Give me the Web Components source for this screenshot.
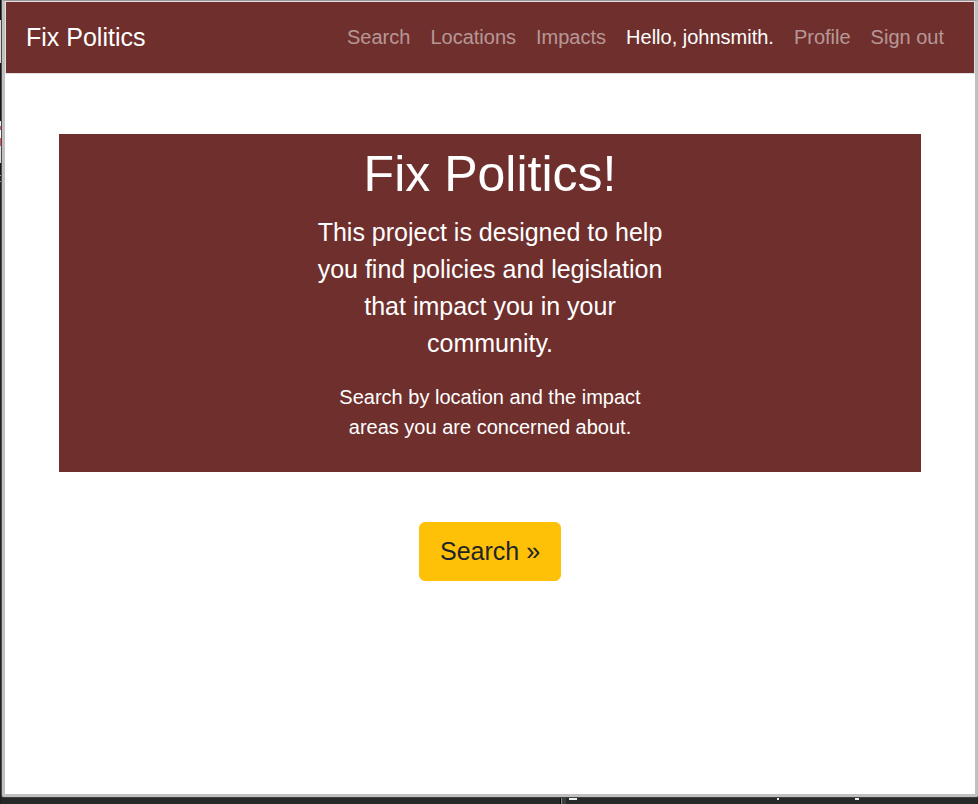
<!DOCTYPE html>
<html lang="en">
<head>
<meta charset="utf-8">
<meta name="viewport" content="width=device-width, initial-scale=1">
<title>Fix Politics</title>
<style>
body{margin:0;font:20px/30px "Liberation Sans",Arial,sans-serif;color:#212529}
</style>
</head>
<body>
<desktop-window>
  <site-nav brand="Fix Politics">
    <nav-item href="#search">Search</nav-item>
    <nav-item href="#locations">Locations</nav-item>
    <nav-item href="#impacts">Impacts</nav-item>
    <nav-item href="#account" active>Hello, johnsmith.</nav-item>
    <nav-item href="#profile">Profile</nav-item>
    <nav-item href="#signout">Sign out</nav-item>
  </site-nav>
  <main-content>
    <hero-panel>
      <span slot="title">Fix Politics!</span>
      <span slot="lead">This project is designed to help you find policies and legislation that impact you in your community.</span>
      <span slot="text">Search by location and the impact areas you are concerned about.</span>
    </hero-panel>
    <action-button href="#search">Search »</action-button>
  </main-content>
</desktop-window>
<script>
const define = (name, html, setup) => {
  const template = document.createElement('template');
  template.innerHTML = '<style>*{box-sizing:border-box}</style>' + html;
  customElements.define(name, class extends HTMLElement {
    constructor() {
      super();
      this.attachShadow({mode: 'open'}).append(template.content.cloneNode(true));
    }
    connectedCallback() { if (setup) setup(this, this.shadowRoot); }
  });
};

define('desktop-window', `
<style>
/* Dark desktop behind the window; slivers of other windows show at the left and bottom edges. */
:host{display:flex;box-sizing:border-box;min-height:100vh;padding:0 0 7px 2px;
  background:
    linear-gradient(#eee 2px,transparent 2px) 569px calc(100% - 1px)/8px 5px no-repeat,
    linear-gradient(#eee 2px,transparent 2px) 777px calc(100% - 1px)/2px 5px no-repeat,
    linear-gradient(#eee 2px,transparent 2px) 855px calc(100% - 1px)/4px 5px no-repeat,
    linear-gradient(90deg,#000 1px,#8a8c8c 1px 2px,#3a4040 2px) 560px 100%/6px 7px no-repeat,
    linear-gradient(#111 20px,#d8d8d8 20px 63px,#151515 63px 121px,#eee 121px 126px,#e35356 126px 130px,#fff 130px 138px,#e35356 138px 146px,#ddd 146px 163px,#181818 163px 175px,#999 175px 176px,#222 176px 181px,#999 181px 182px,#202020 182px) 0 0/1px 100% no-repeat,
    #272828}
.frame{flex:1;min-width:0;border:3px solid #c0c0c0;border-top:1px solid #9b9599;border-radius:0 0 2px 2px;background:#fff;box-shadow:-1px 0 #4b4b4b,0 1px #3d4240}
</style>
<div class="frame"><slot></slot></div>`);

define('site-nav', `
<style>
:host{display:block;padding:1px;background:#e2dfe2}
nav{display:flex;flex-wrap:wrap;align-items:flex-start;justify-content:space-between;padding:10px 20px;background:#6f2f2d}
.brand{color:#fff;font-size:25px;line-height:51px;text-decoration:none}
.links{display:flex;flex-wrap:wrap}
</style>
<nav aria-label="Main"><a class="brand" href="#home"></a><div class="links"><slot></slot></div></nav>`,
(el, root) => { root.querySelector('.brand').textContent = el.getAttribute('brand'); });

define('nav-item', `
<style>
:host{display:block}
a{display:block;padding:10px;color:rgba(255,255,255,.5);text-decoration:none}
:host([active]) a{color:#fff}
</style>
<a><slot></slot></a>`,
(el, root) => { root.querySelector('a').href = el.getAttribute('href'); });

define('main-content', `
<style>
:host{display:block}
main{display:flex;flex-direction:column;align-items:center;gap:50px;padding:60px 54px}
::slotted(hero-panel){align-self:stretch}
</style>
<main><slot></slot></main>`);

define('hero-panel', `
<style>
:host{display:block}
section{display:flex;flex-direction:column;align-items:center;padding:10px;background:#6f2f2d;color:#fff;text-align:center}
h1{margin:0 0 10px;font-size:50px;line-height:60px;font-weight:400}
p{max-width:350px;margin:0 0 20px}
.lead{font-size:25px;line-height:37px}
</style>
<section><h1><slot name="title"></slot></h1><p class="lead"><slot name="lead"></slot></p><p><slot name="text"></slot></p></section>`);

define('action-button', `
<style>
:host{display:block}
a{display:block;padding:10px 20px;border:1px solid #ffc107;border-radius:6px;background:#ffc107;color:#212529;font-size:25px;line-height:37px;text-decoration:none}
</style>
<a><slot></slot></a>`,
(el, root) => { root.querySelector('a').href = el.getAttribute('href'); });
</script>
</body>
</html>
